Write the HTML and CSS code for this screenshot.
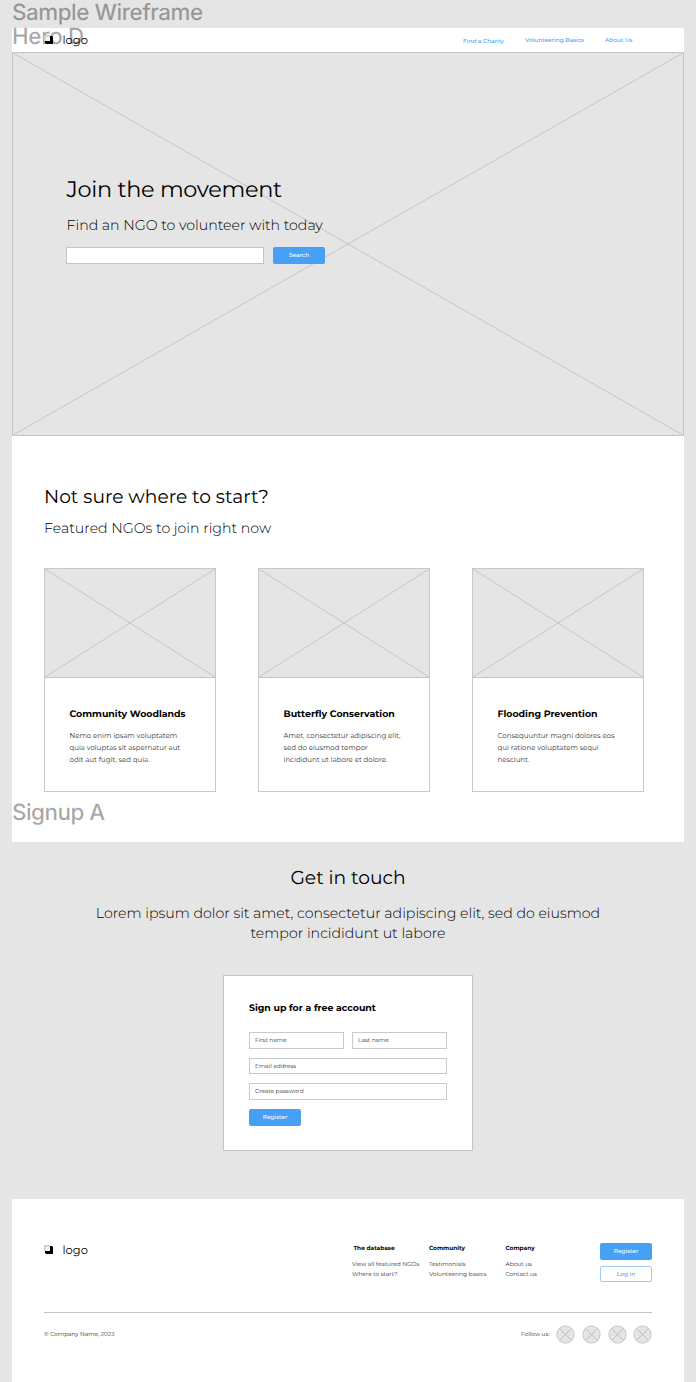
FILE: index.html
```html
<!DOCTYPE html>
<html lang="en">
<head>
<meta charset="utf-8">
<title>Sample Wireframe</title>
<link rel="stylesheet" href="styles.css">
</head>
<body>
<svg class="defs" aria-hidden="true">
  <symbol id="mark" viewBox="0 0 9 9">
    <path d="M2 2H6V1H8L9 2V9H2L1 8V6H2Z" fill="#000"/>
    <path d="M0 0H6V6H0Z" fill="#ccc"/>
    <path d="M1.7 1.7H6V6H1.7Z" fill="#f4f4f4"/>
  </symbol>
  <symbol id="dot" viewBox="0 0 19 19">
    <circle cx="9.5" cy="9.5" r="8.6" fill="#e5e5e5" stroke="#c4c4c4"/>
    <path d="M3.5 3.5L15.5 15.5M15.5 3.5L3.5 15.5" stroke="#b8b8b8" stroke-width=".9"/>
  </symbol>
</svg>
<div class="board">
  <div class="label label-page">Sample Wireframe</div>
  <header class="topbar">
    <div class="label label-hero">Hero D</div>
    <div class="brand"><svg class="mark"><use href="#mark"/></svg><span>logo</span></div>
    <nav class="nav"><a class="nav-low">Find a Charity</a><a>Volunteering Basics</a><a>About Us</a></nav>
  </header>
  <section class="hero">
    <svg class="cross" viewBox="0 0 100 100" preserveAspectRatio="none"><path d="M0 0L100 100M100 0L0 100"/></svg>
    <div class="hero-copy">
      <h1>Join the movement</h1>
      <p class="lead">Find an NGO to volunteer with today</p>
      <div class="search"><div class="search-field"></div><div class="btn">Search</div></div>
    </div>
  </section>
  <section class="featured">
    <h2>Not sure where to start?</h2>
    <p class="lead lead-featured">Featured NGOs to join right now</p>
    <div class="cards">
      <article class="card">
        <div class="thumb"><svg class="cross" viewBox="0 0 100 100" preserveAspectRatio="none"><path d="M0 0L100 100M100 0L0 100"/></svg></div>
        <h3>Community Woodlands</h3>
        <p>Nemo enim ipsam voluptatem<br>quia voluptas sit aspernatur aut<br>odit aut fugit, sed quia.</p>
      </article>
      <article class="card">
        <div class="thumb"><svg class="cross" viewBox="0 0 100 100" preserveAspectRatio="none"><path d="M0 0L100 100M100 0L0 100"/></svg></div>
        <h3>Butterfly Conservation</h3>
        <p>Amet, consectetur adipiscing elit,<br>sed do eiusmod tempor<br>incididunt ut labore et dolore.</p>
      </article>
      <article class="card">
        <div class="thumb"><svg class="cross" viewBox="0 0 100 100" preserveAspectRatio="none"><path d="M0 0L100 100M100 0L0 100"/></svg></div>
        <h3>Flooding Prevention</h3>
        <p>Consequuntur magni dolores eos<br>qui ratione voluptatem sequi<br>nesciunt.</p>
      </article>
    </div>
    <div class="label label-signup">Signup A</div>
  </section>
  <section class="signup">
    <h2>Get in touch</h2>
    <p class="lead lead-touch">Lorem ipsum dolor sit amet, consectetur adipiscing elit, sed do eiusmod<br>tempor incididunt ut labore</p>
    <form class="form">
      <h3>Sign up for a free account</h3>
      <div class="fields">
        <div class="field">First name</div><div class="field">Last name</div>
        <div class="field full mid">Email address</div>
        <div class="field full">Create password</div>
      </div>
      <div class="btn">Register</div>
    </form>
  </section>
  <footer class="footer">
    <div class="foot-top">
      <div class="brand"><svg class="mark"><use href="#mark"/></svg><span>logo</span></div>
      <div class="cols">
        <div class="col"><h4 class="inset">The database</h4><a>View all featured NGOs</a><a>Where to start?</a></div>
        <div class="col"><h4>Community</h4><a>Testimonials</a><a>Volunteering basics</a></div>
        <div class="col"><h4>Company</h4><a>About us</a><a>Contact us</a></div>
      </div>
      <div class="actions"><div class="btn">Register</div><div class="btn outline">Log in</div></div>
    </div>
    <div class="foot-bottom">
      <span>© Company Name, 2023</span>
      <div class="social"><span>Follow us:</span>
        <svg><use href="#dot"/></svg><svg><use href="#dot"/></svg><svg><use href="#dot"/></svg><svg><use href="#dot"/></svg>
      </div>
    </div>
  </footer>
</div>
</body>
</html>
```

FILE: styles.css
```css
* { box-sizing: border-box; }
body { margin: 0; background: #e5e5e5; font-family: Montserrat, Inter, sans-serif; color: #000; text-rendering: geometricPrecision; }
h1, h2, h3, h4, p { margin: 0; font-weight: 400; white-space: nowrap; }
.defs { position: absolute; width: 0; height: 0; }
.board { position: relative; width: 672px; height: 1382px; margin: 0 auto; padding-top: 28px; }

.label { position: absolute; left: 0; font: 500 22.4px/24px Inter, sans-serif; letter-spacing: -.45px; color: rgba(0, 0, 0, .35); white-space: nowrap; }
.label-page { top: 1px; }
.label-hero { top: -3px; letter-spacing: -.3px; }
.label-signup { bottom: 17px; letter-spacing: -.5px; }

.topbar { position: relative; display: flex; justify-content: space-between; height: 24px; padding: 0 51.5px 0 32px; background: #fff; }
.brand { position: relative; display: flex; gap: 9.5px; height: 16px; align-items: center; font-size: 11.5px; line-height: 16px; font-weight: 400; }
.topbar .brand { margin-top: 4px; }
.mark { width: 9px; height: 9px; margin-bottom: 1px; }
.nav { display: flex; gap: 21px; padding-top: 8px; font-size: 5.85px; font-weight: 500; line-height: 9px; color: #46a0f5; white-space: nowrap; }
.nav-low { padding-top: 1px; }

.hero { position: relative; height: 384px; padding: 122px 0 0 53.5px; border: 1px solid #c4c4c4; }
.cross { position: absolute; inset: 0; width: 100%; height: 100%; }
.cross path { fill: none; stroke: #bcbcbc; stroke-width: .8; vector-effect: non-scaling-stroke; }
.hero-copy { position: relative; }
h1 { font-size: 22.4px; line-height: 28px; letter-spacing: -.28px; }
.lead { font-size: 14.17px; line-height: 20px; font-weight: 300; color: #000; }
.hero .lead { margin: 12px 0; }
.search { display: flex; gap: 9px; margin-left: -.5px; }
.search-field { width: 198px; height: 17px; border: 1px solid #c4c4c4; background: #fff; }
.btn { width: 52px; height: 16.5px; border-radius: 2px; background: #46a0f5; color: #fff; font-size: 5.85px; font-weight: 500; line-height: 17.5px; text-align: center; }

.featured { position: relative; height: 406px; padding: 49px 32px 0; background: #fff; }
h2 { font-size: 18.67px; line-height: 24px; }
.lead-featured { margin: 9px 0 30px; }
.cards { display: flex; gap: 42px; }
.card { width: 172px; height: 224px; border: 1px solid #c9c9c9; }
.thumb { position: relative; height: 109px; background: #e5e5e5; border-bottom: 1px solid #c4c4c4; }
h3 { font-size: 9.4px; line-height: 12px; font-weight: 700; }
.card h3 { margin: 31px 0 9px 24.5px; }
.card p { margin-left: 24.5px; font-size: 7px; line-height: 12px; color: #333; }

.signup { display: flex; flex-direction: column; align-items: center; height: 357px; padding-top: 24px; text-align: center; }
.lead-touch { margin: 13px 0 32px; }
.form { width: 250px; height: 176px; padding: 27px 25px 0; border: 1px solid #c4c4c4; background: #fff; text-align: left; }
.fields { display: grid; grid-template-columns: 1fr 1fr; gap: 9px 8px; margin: 17px 0 9px; }
.field { height: 17px; padding-left: 5px; border: 1px solid #c9c9c9; font-size: 5.85px; line-height: 15px; color: #333; }
.full { grid-column: 1 / -1; }
.mid { height: 16px; line-height: 15px; }

.footer { height: 183px; padding: 44px 32px 0; background: #fff; }
.foot-top { display: flex; height: 70px; border-bottom: 1px solid #c4c4c4; }
.footer .brand { width: 308px; margin-top: -1px; }
.cols { display: grid; grid-template-columns: 77px 76.5px 94.5px; padding-top: 1px; font-size: 5.85px; white-space: nowrap; color: #333; }
.col { display: flex; flex-direction: column; line-height: 9.5px; }
h4 { margin-bottom: 6px; font-size: 5.85px; line-height: 10px; font-weight: 700; color: #000; }
.inset { padding-left: 1.5px; }
.actions { display: flex; flex-direction: column; gap: 6px; }
.outline { border: 1px solid #9bcdfa; background: #fff; color: #46a0f5; line-height: 15.5px; }
.foot-bottom { display: flex; justify-content: space-between; align-items: center; height: 43px; font-size: 5.85px; color: #333; }
.social { display: flex; align-items: center; gap: 6.7px; margin-right: -.4px; }
.social svg { width: 19px; height: 19px; }
```
